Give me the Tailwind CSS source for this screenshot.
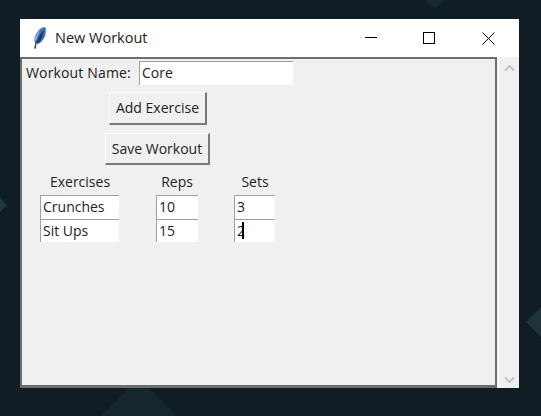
<!DOCTYPE html>
<html>
<head>
<meta charset="utf-8">
<script src="https://cdn.jsdelivr.net/npm/@tailwindcss/browser@4"></script>
</head>
<body class="bg-[#101d25] w-[541px] h-[416px] overflow-hidden relative font-['Open_Sans','Noto_Sans',sans-serif] text-[14px] text-[#222]">
  <!-- desktop background shapes -->
  <svg class="absolute left-0 top-0 w-[541px] h-[416px]" viewBox="0 0 541 416">
    <polygon points="0,198 7,205 0,212" fill="#21373e"/>
    <polygon points="541,307 526,322 541,337" fill="#20353b"/>
    <polygon points="425,0 445,0 435,9" fill="#172931"/>
    <polygon points="139,378 177,416 101,416" fill="#16262d"/>
  </svg>

  <!-- window -->
  <div class="absolute left-[20px] top-[19px] w-[499px] h-[369px] bg-[#f0f0f0] flex flex-col">
    <div class="h-[38px] shrink-0 bg-white flex items-center">
      <svg class="ml-[13px] w-[14px] h-[22px]" viewBox="0 0 14 22">
        <path d="M1.5 21.5 C1.5 19.5 1.8 18 2.2 16.5 C0.3 12 2.5 4.5 9 0.8 C10 0.3 11.5 0.2 12.5 0.5 C13.8 5.5 11.8 12.5 7 16 C5.5 17 4 17 3.3 16.8 C3 18.5 2.9 20 2.9 21.5 Z" fill="#3f74bd"/>
        <path d="M3 16.5 C4.5 12 7 7 10.8 2.5 C10.5 7 9 12 6 15.5 Z" fill="#22385c"/>
        <path d="M2 12.5 C2.5 9 4.5 5.5 7.5 3 C5.5 6 4 9.5 3 14 Z" fill="#a9bfdc"/>
        <path d="M1.5 21.5 L2.2 16.5 L3.3 16.8 L2.9 21.5 Z" fill="#3a4250"/>
      </svg>
      <span class="ml-[8px] mt-[-1px] text-[14.5px] text-[#1a1a1a]">New Workout</span>
      <div class="ml-auto flex items-center h-full">
        <svg class="w-[12px] h-[12px] mr-[46px]" viewBox="0 0 12 12"><path d="M0 5.5H12" stroke="#000" stroke-width="1"/></svg>
        <svg class="w-[12px] h-[12px] mr-[47px]" viewBox="0 0 12 12"><rect x="0.5" y="0.5" width="11" height="11" fill="none" stroke="#000"/></svg>
        <svg class="w-[13px] h-[13px] mr-[24px]" viewBox="0 0 13 13"><path d="M0.5 0.5L12.5 12.5M12.5 0.5L0.5 12.5" stroke="#000"/></svg>
      </div>
    </div>

    <div class="flex-1 flex min-h-0">
      <!-- canvas -->
      <div class="w-[477px] border-2 border-[#6e6e6e] border-b-[3px] bg-[#f0f0f0] pl-[4px] pt-[2px]">
        <div class="flex items-center h-[24px]">
          <span class="w-[113px] mt-[-1px] tracking-[0.15px]">Workout Name:</span>
          <div class="w-[154px] h-[24px] bg-white border-t border-l border-[#a0a0a0] pl-[2px] leading-[21px]">Core</div>
        </div>
        <button class="block ml-[83px] mt-[7px] w-[98px] h-[33px] pb-[2px] bg-[#f0f0f0] border border-white border-r-2 border-b-2 border-r-[#7a7a7a] border-b-[#7a7a7a]">Add Exercise</button>
        <button class="block ml-[79px] mt-[8px] w-[105px] h-[32px] bg-[#f0f0f0] border border-white border-r-2 border-b-2 border-r-[#7a7a7a] border-b-[#7a7a7a]">Save Workout</button>
        <div class="grid grid-cols-[80px_42px_42px] gap-x-[36px] ml-[14px] mt-[8px]">
          <div class="text-center h-[22px] leading-[18px]">Exercises</div>
          <div class="text-center h-[22px] leading-[18px]">Reps</div>
          <div class="text-center h-[22px] leading-[18px]">Sets</div>

          <div class="w-[79px] h-[24px] bg-white border-t border-l border-[#a0a0a0] pl-[2px] leading-[21px]">Crunches</div>
          <div class="h-[24px] bg-white border-t border-l border-[#a0a0a0] pl-[2px] leading-[21px]">10</div>
          <div class="w-[41px] h-[24px] bg-white border-t border-l border-[#a0a0a0] pl-[2px] leading-[21px]">3</div>

          <div class="w-[79px] h-[23px] bg-white border-t border-l border-[#a0a0a0] pl-[2px] leading-[21px]">Sit Ups</div>
          <div class="h-[23px] bg-white border-t border-l border-[#a0a0a0] pl-[2px] leading-[21px]">15</div>
          <div class="w-[41px] h-[23px] bg-white border-t border-l border-[#a0a0a0] pl-[2px] leading-[21px] relative">2<span class="absolute left-[7px] top-[2px] w-[2px] h-[17px] bg-black"></span></div>
        </div>
      </div>

      <!-- scrollbar -->
      <div class="flex-1 ml-[1px] flex flex-col justify-between items-center pt-[7px] pb-[4px] bg-[#f0f0f0] border-l border-white">
        <svg class="w-[11px] h-[8px]" viewBox="0 0 11 8"><path d="M1 6.5L5.5 2L10 6.5" fill="none" stroke="#c4c4c4" stroke-width="2"/></svg>
        <svg class="w-[11px] h-[8px]" viewBox="0 0 11 8"><path d="M1 1.5L5.5 6L10 1.5" fill="none" stroke="#c4c4c4" stroke-width="2"/></svg>
      </div>
    </div>
  </div>
</body>
</html>
